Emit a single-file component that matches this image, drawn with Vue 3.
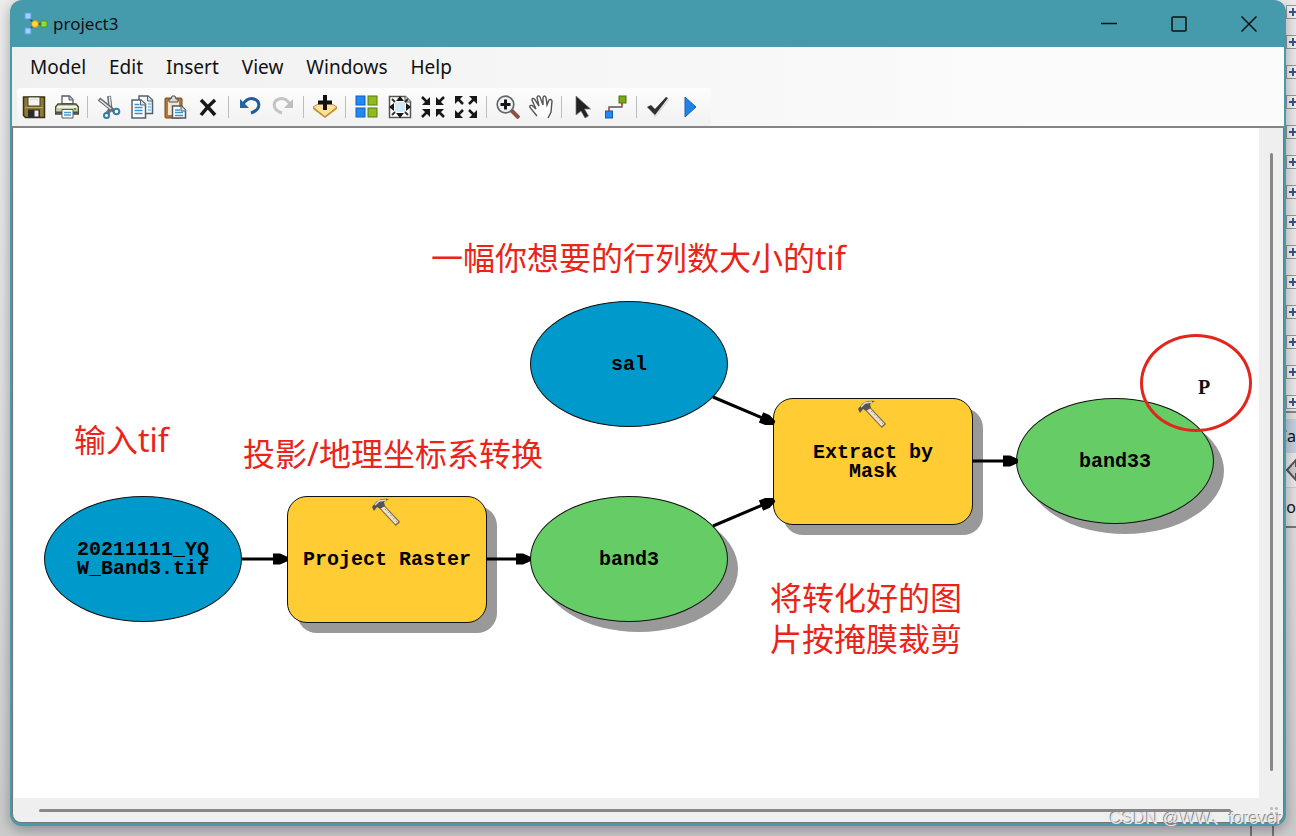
<script setup>
const menus = ['Model', 'Edit', 'Insert', 'View', 'Windows', 'Help']

const groups = [
  ['Save', 'Print'],
  ['Cut', 'Copy', 'Paste', 'Delete'],
  ['Undo', 'Redo'],
  ['Add data'],
  ['Auto layout', 'Full extent', 'Fixed zoom in', 'Fixed zoom out'],
  ['Zoom in', 'Pan'],
  ['Select', 'Connect'],
  ['Validate', 'Run'],
]

const nodes = [
  { id: 'input', kind: 'data', x: 30, y: 368, w: 198, h: 126, label: '20211111_YQ\nW_Band3.tif' },
  { id: 'project', kind: 'tool', x: 273, y: 368, w: 200, h: 127, label: 'Project Raster' },
  { id: 'sal', kind: 'data', x: 516, y: 173, w: 198, h: 126, label: 'sal' },
  { id: 'band3', kind: 'derived', x: 516, y: 368, w: 198, h: 126, label: 'band3' },
  { id: 'extract', kind: 'tool', x: 759, y: 270, w: 200, h: 127, label: 'Extract by\nMask' },
  { id: 'band33', kind: 'derived', x: 1002, y: 270, w: 198, h: 126, label: 'band33' },
]

const notes = [
  { x: 417, y: 109, text: '一幅你想要的行列数大小的tif' },
  { x: 60, y: 291, text: '输入tif' },
  { x: 229, y: 305, text: '投影/地理坐标系转换' },
  { x: 756, y: 449, text: '将转化好的图\n片按掩膜裁剪' },
]

const links = [
  { x: 227, y: 431, len: 46, angle: 0 },
  { x: 472, y: 431, len: 44, angle: 0 },
  { x: 699, y: 269, len: 66, angle: 23 },
  { x: 699, y: 398, len: 66, angle: -23 },
  { x: 958, y: 333, len: 45, angle: 0 },
]

const place = (o) => ({ left: o.x + 'px', top: o.y + 'px' })
const box = (n) => ({ ...place(n), width: n.w + 'px', height: n.h + 'px' })
</script>

<template>
  <div class="desktop">
    <main class="window">
      <header class="titlebar">
        <svg class="logo" viewBox="0 0 24 24" aria-hidden="true">
          <path d="M4 5 11 12 4 19M11 12h9" fill="none" stroke="#345" stroke-width="1.5" />
          <rect x="1" y="1" width="6" height="6" fill="#9fd0ff" stroke="#5b9ee0" />
          <rect x="1" y="16" width="6" height="6" fill="#9fd0ff" stroke="#5b9ee0" />
          <circle cx="11" cy="12" r="3.5" fill="#ffd84a" stroke="#c98a10" />
          <rect x="17" y="9" width="6" height="6" fill="#8fdc4a" stroke="#4b9a1e" />
        </svg>
        <h1>project3</h1>
        <div class="controls">
          <button type="button" aria-label="Minimize"><svg viewBox="0 0 16 16"><path d="M0 7.500h16" /></svg></button>
          <button type="button" aria-label="Maximize"><svg viewBox="0 0 16 16"><rect x="1" y="1" width="14" height="14" rx="1" /></svg></button>
          <button type="button" aria-label="Close"><svg viewBox="0 0 16 16"><path d="M.5.5l15 15M15.500.5l-15 15" /></svg></button>
        </div>
      </header>

      <div class="bars">
        <nav class="menu"><button v-for="m in menus" :key="m" type="button">{{ m }}</button></nav>
        <div class="toolbar" role="toolbar" aria-label="Model tools">
          <div v-for="(g, i) in groups" :key="i" class="group">
            <button v-for="t in g" :key="t" type="button" :aria-label="t">
              <svg viewBox="0 0 24 24">
                <g v-if="t === 'Save'">
                  <path d="M1.500 2h21v20.500h-19l-2-2z" fill="#8a7a35" stroke="#3a3115" stroke-width="1.500" />
                  <rect x="6" y="2" width="12" height="9" fill="#f4f4f4" stroke="#4a4020" />
                  <path d="M8 4.500h8" stroke="#ddd" /><path d="M3 12.500h18" stroke="#b9a95a" />
                  <rect x="6" y="14.500" width="12" height="8" fill="#2b2b2b" /><rect x="12.500" y="15.500" width="4" height="6" fill="#ececec" />
                </g>
                <g v-else-if="t === 'Print'">
                  <path d="M7 9V1h7.500L18 4.500V9z" fill="#fff" stroke="#555a64" stroke-width="1.300" /><path d="M14 1v4h4" fill="#b9c8dc" stroke="#555a64" />
                  <path d="M3 9h18l2.500 3v7h-23v-7z" fill="#c4cba2" stroke="#45483b" stroke-width="1.300" />
                  <path d="M2 12h20" stroke="#f0f4df" stroke-width="2" /><path d="M1 17.500h22" stroke="#4d5142" stroke-width="2" /><path d="M19 14h2" stroke="#4ca52f" stroke-width="2" />
                  <path d="M7 14.500h11V23H7z" fill="#fff" stroke="#555a64" /><path d="M9 17.500h7M9 20h7" stroke="#4a9ad4" stroke-width="1.500" />
                </g>
                <g v-else-if="t === 'Cut'">
                  <path d="M12 1 13.500 14 10 19" fill="none" stroke="#6b7075" stroke-width="4" /><path d="M12.500 1.500 13.500 14" stroke="#e8eaec" stroke-width="1.500" />
                  <path d="M2 4 17 16" stroke="#666b70" stroke-width="4" /><path d="M3 5 14 14" stroke="#e4e8ea" stroke-width="1.500" />
                  <circle cx="9.500" cy="20.500" r="2.500" fill="#fff" stroke="#337fa8" stroke-width="2" /><circle cx="19.500" cy="16.500" r="2.800" fill="#fff" stroke="#337fa8" stroke-width="2" />
                </g>
                <g v-else-if="t === 'Copy'">
                  <path d="M9 1h9l4.500 4v13.500H9z" fill="#f5f8fb" stroke="#56606c" stroke-width="1.500" /><path d="M17.500 1v5h5" fill="#d5e3ef" stroke="#56606c" /><path d="M18 9h3M18 12h3M18 15h3" stroke="#4b9ed8" />
                  <path d="M2 5h9l4.500 4v14H2z" fill="#fff" stroke="#56606c" stroke-width="1.500" /><path d="M10.500 5v5h5" fill="#d5e3ef" stroke="#56606c" /><path d="M4.500 9.500h5M4.500 12.500h8M4.500 15.500h8M4.500 18.500h8" stroke="#3990cf" stroke-width="1.400" />
                </g>
                <g v-else-if="t === 'Paste'">
                  <rect x="2" y="3" width="17" height="20" rx="1" fill="#b5763a" stroke="#79441a" /><rect x="5" y="6" width="11" height="14" fill="#f4e7d2" />
                  <path d="M6 7V4h2l1-3h3l1 3h2v3z" fill="#d7d9dc" stroke="#55504c" />
                  <path d="M9.500 11h9l4 4v8h-13z" fill="#fff" stroke="#4c5866" stroke-width="1.500" /><path d="M18 11v5h5" fill="#d5e3ef" stroke="#4c5866" /><path d="M12 15h5M12 17.500h8M12 20.500h8" stroke="#3b93d0" stroke-width="1.300" />
                </g>
                <path v-else-if="t === 'Delete'" d="M5 5 Q11 11 19 20M19 5 Q12 11 5 20" fill="none" stroke="#171717" stroke-width="3.500" />
                <g v-else-if="t === 'Undo'">
                  <path d="M5 9Q10 2 16 4Q22 6 20.500 12Q19 16 13 18" fill="none" stroke="#1f5d99" stroke-width="3" /><path d="M2 4v9h9z" fill="#2267a5" />
                </g>
                <g v-else-if="t === 'Redo'">
                  <path d="M19 9Q14 2 8 4Q2 6 3.500 12Q5 16 11 18" fill="none" stroke="#c4c4c4" stroke-width="3" /><path d="M22 4v9h-9z" fill="#bdbdbd" />
                </g>
                <g v-else-if="t === 'Add data'">
                  <path d="M12 5 24 12 12 22 0 12z" fill="#ffe199" stroke="#bb8c35" /><path d="M0 12v2l12 9 12-9v-2l-12 9z" fill="#c58f35" /><path d="M12 0v15M5 7.500h14" stroke="#111" stroke-width="4" />
                </g>
                <g v-else-if="t === 'Auto layout'" stroke-width="1">
                  <rect x="1" y="1" width="9" height="9" fill="#2189f4" stroke="#125db8" /><rect x="13" y="1" width="9" height="9" fill="#8fba22" stroke="#587b0b" />
                  <rect x="1" y="13" width="9" height="9" fill="#2189f4" stroke="#125db8" /><rect x="13" y="13" width="9" height="9" fill="#8fba22" stroke="#587b0b" />
                </g>
                <g v-else-if="t === 'Full extent'">
                  <path d="M1.500 1.500h16l5 5v16h-21z" fill="#fff" stroke="#575757" stroke-width="1.500" /><path d="M17 1v6h6" fill="#ddd" stroke="#575757" /><rect x="7" y="7" width="10" height="10" fill="#d3e8f5" />
                  <path d="M12 1l4 5H8zM12 23l4-5H8zM1 12l5-4v8zM23 12l-5-4v8z" fill="#171717" /><path d="M4 4l3 3M20 20l-3-3M4 20l3-3M20 4l-3 3" stroke="#333" stroke-width="2" />
                </g>
                <g v-else-if="t === 'Fixed zoom in'" fill="#171717" stroke="#171717" stroke-width="2.500">
                  <path d="M1 2l6 6M23 2l-6 6M1 22l6-6M23 22l-6-6" /><path d="M9 2v8H1zM15 2v8h8zM9 22v-8H1zM15 22v-8h8z" stroke="none" />
                </g>
                <g v-else-if="t === 'Fixed zoom out'" fill="#171717" stroke="#171717" stroke-width="2.500">
                  <path d="M3 3l6 6M21 3l-6 6M3 21l6-6M21 21l-6-6" /><path d="M1 1v8l8-8zM23 1v8l-8-8zM1 23v-8l8 8zM23 23v-8l-8 8z" stroke="none" />
                </g>
                <g v-else-if="t === 'Zoom in'">
                  <path d="M15 15l8 8" stroke="#8c5040" stroke-width="4" /><circle cx="9.500" cy="9.500" r="8.300" fill="#eef3f5" stroke="#666" stroke-width="1.700" /><path d="M9.500 4.500v10M4.500 9.500h10" stroke="#171717" stroke-width="3" />
                </g>
                <path v-else-if="t === 'Pan'" d="M8 21 1 12.500Q0 10 3 10.500L7 14 3 5Q3 2.500 5.500 4L10 11 8 2.500Q9-.5 11 2L14 10V2.500Q15.500-.5 17 2.500L18 10 20 5Q22 3.500 23 6L22 17 19 23" fill="#fff" stroke="#555" stroke-width="1.400" />
                <path v-else-if="t === 'Select'" d="M5 1v19l5-4 4 7 3.500-2-4-7h6z" fill="#222" stroke="#777" stroke-width=".7" />
                <g v-else-if="t === 'Connect'">
                  <path d="M5 16v-4h13V8" fill="none" stroke="#555" stroke-width="1.300" /><path d="M5 16v-3M18 11V8" stroke="#e44" stroke-width="1.500" />
                  <rect x="1.500" y="16" width="7" height="7" fill="#2189f4" stroke="#125db8" /><rect x="15" y="1" width="7" height="7" fill="#79a91b" stroke="#4c700c" />
                </g>
                <g v-else-if="t === 'Validate'">
                  <path d="M4 14l5 7L23 4" fill="none" stroke="#ddd" stroke-width="2" /><path d="M1 12l4-2 4 4L20 2l2 1L9 20z" fill="#303030" />
                </g>
                <path v-else d="M6 2 17 12 6 22z" fill="#1f83e8" stroke="#1763b5" />
              </svg>
            </button>
          </div>
        </div>
      </div>

      <section class="view">
        <div class="canvas">
          <div v-for="n in nodes" :key="n.id" class="node" :class="n.kind" :style="box(n)">
            <svg v-if="n.kind === 'tool'" class="hammer" viewBox="0 0 30 30" aria-hidden="true">
              <path d="M11 9 27 26" stroke="#79684d" stroke-width="6" /><path d="M11 9 26 25" stroke="#eee2c7" stroke-width="4" /><path d="M14 11 27 25" stroke="#a99b83" stroke-dasharray="2 2" />
              <path d="M1 9 5 4Q10 0 18 1L13 4 14 8 9 11 6 9 3 13z" fill="#555" /><path d="M4 7 8 3 15 2" fill="none" stroke="#ddd" stroke-width="1.500" />
            </svg>
            <span class="label">{{ n.label }}</span>
          </div>
          <svg v-for="(l, i) in links" :key="i" class="link" :style="{ left: l.x + 'px', top: l.y - 8 + 'px', width: l.len + 'px', transform: `rotate(${l.angle}deg)` }" aria-hidden="true">
            <rect y="6.500" width="100%" height="3" />
            <svg :x="l.len - 14" width="15" height="16"><path d="M0 2.500h7L15 6v4l-8 3.500H0z" /></svg>
          </svg>
          <span class="param">P</span>
          <div class="ring"></div>
          <p v-for="n in notes" :key="n.x" class="note" :style="place(n)">{{ n.text }}</p>
        </div>
        <div class="vscroll"><div class="thumb"></div></div>
        <div class="hscroll"><div class="thumb"></div></div>
        <div class="grip"></div>
      </section>
    </main>

    <aside class="behind">
      <div class="tree"><div v-for="n in 14" :key="n" class="row"><span class="plus"></span></div></div>
      <div class="tab">Ca</div>
      <div class="back"><svg viewBox="0 0 20 24" aria-hidden="true"><path d="M1 12 10 2v6h9v8h-9v6z" /></svg></div>
      <div class="tools">oo</div>
    </aside>
    <div class="ticks"></div>
    <div class="watermark">CSDN @WW、forever</div>
  </div>
</template>

<style>
body { margin: 0; }
</style>

<style scoped>
.desktop {
  position: relative;
  box-sizing: border-box;
  display: flex;
  min-height: 100vh;
  padding: 0 0 10px 10px;
  overflow: hidden;
  background: linear-gradient(#ededed, #dedede 60%, #cccccc);
  font-family: "Noto Sans", "Noto Sans CJK SC", sans-serif;
  color: #111;
}
button { margin: 0; padding: 0; border: 0; background: none; font: inherit; color: inherit; }
.window {
  position: relative;
  z-index: 1;
  flex: 1;
  min-width: 0;
  box-sizing: border-box;
  display: flex;
  flex-direction: column;
  padding: 0 2px 3px;
  border-radius: 12px;
  background: #459aac;
  box-shadow: 0 4px 14px rgba(0, 0, 0, .32);
}
.titlebar { display: flex; align-items: center; height: 47px; padding-left: 12px; }
.logo { width: 24px; height: 24px; }
h1 { margin: 0 0 0 5px; font-size: 17px; line-height: 24px; font-weight: 400; }
.controls { display: flex; margin-left: auto; }
.controls button { display: grid; place-items: center; width: 70px; height: 47px; }
.controls svg { width: 16px; height: 16px; fill: none; stroke: #111; stroke-width: 1.500; }
.bars { background: linear-gradient(90deg, #f0f0f0, #fbfbfb 80%); border-bottom: 2px solid #858585; }
.menu { display: flex; gap: 23px; height: 41px; padding-left: 18px; font-size: 19px; line-height: 41px; }
.toolbar { display: flex; align-items: center; width: max-content; height: 38px; margin-left: 5px; padding-right: 4px; border-radius: 4px; background: linear-gradient(#fdfdfd, #f1f1f1); }
.group { display: flex; align-items: center; }
.group + .group::before { content: ""; width: 1px; height: 22px; margin: 0 4px; background: #bdbdbd; }
.toolbar button { display: grid; place-items: center; width: 33px; height: 36px; }
.toolbar svg { width: 24px; height: 24px; }
.view {
  flex: 1;
  display: grid;
  grid-template-columns: minmax(0, 1fr) 24px;
  grid-template-rows: minmax(0, 1fr) 24px;
  border: 1px solid #777;
  border-top: 0;
  border-radius: 0 0 9px 9px;
  background: #efefef;
  overflow: hidden;
}
.canvas { position: relative; min-height: 660px; margin-left: 1px; overflow: hidden; background: #fff; }
.vscroll { display: flex; justify-content: center; padding: 25px 0 27px; }
.vscroll .thumb { width: 3px; border-radius: 2px; background: #888; }
.hscroll { display: flex; flex-direction: column; justify-content: center; padding: 0 28px 0 26px; }
.hscroll .thumb { height: 3px; border-radius: 2px; background: #888; }
.grip { align-self: end; justify-self: end; width: 10px; height: 10px; margin: 0 4px 6px 0; background: radial-gradient(circle, #bbb 1px, transparent 2px) 0 0 / 5px 5px; }
.link { position: absolute; height: 16px; transform-origin: 0 50%; overflow: visible; fill: #000; }
.node {
  position: absolute;
  box-sizing: border-box;
  display: flex;
  align-items: center;
  justify-content: center;
  border: 1px solid #111;
  border-radius: 50%;
}
.label { font: bold 20px/19px "Liberation Mono", monospace; white-space: pre; text-align: center; color: #000; }
.data { background: #0099cc; }
.derived { background: #66cc66; box-shadow: 10px 10px 0 #999; }
.tool { border-radius: 20px; background: #ffcc33; box-shadow: 10px 10px 0 #999; }
.hammer { position: absolute; left: 50%; top: 1px; width: 30px; height: 30px; margin-left: -16px; }
.param { position: absolute; left: 1184px; top: 250px; font: bold 20px/19px "Liberation Serif", serif; }
.ring { position: absolute; left: 1126px; top: 206px; box-sizing: border-box; width: 112px; height: 98px; border: 3px solid #e3261c; border-radius: 50%; }
.note { position: absolute; margin: 0; font-size: 32px; line-height: 41px; white-space: pre; color: #ea2418; }
.behind { flex: none; width: 10px; overflow: hidden; font-size: 16px; }
.tree { box-sizing: border-box; height: 413px; border-bottom: 2px solid #888; background: #eaeaea; overflow: hidden; }
.row { height: 30px; padding-top: 5px; box-sizing: border-box; }
.plus {
  display: block;
  box-sizing: border-box;
  width: 13px;
  height: 14px;
  border: 1px solid #999;
  background:
    linear-gradient(#3b5590, #3b5590) 50% 50% / 8px 2px no-repeat,
    linear-gradient(#3b5590, #3b5590) 50% 50% / 2px 8px no-repeat,
    #f2f2f2;
}
.tab, .back, .tools { display: flex; align-items: center; justify-content: flex-end; }
.tab { height: 34px; margin-top: 6px; background: #c3d0df; }
.back { height: 34px; background: #e9e9e9; border-bottom: 1px solid #ccc; }
.back svg { flex: none; width: 20px; height: 24px; margin-right: -10px; fill: #ccc; stroke: #555; stroke-width: 2; }
.tools { height: 38px; border-bottom: 2px solid #777; background: #e2e2e2; }
.ticks { position: absolute; right: 22px; bottom: 0; width: 24px; height: 10px; box-sizing: border-box; border: solid #777; border-width: 0 2px; }
.watermark { position: absolute; z-index: 2; right: 14px; bottom: 5px; font: 17px/24px "Liberation Sans", "Noto Sans CJK SC", sans-serif; color: #e6e6e6; text-shadow: -1px -1px 0 #888; }
</style>
